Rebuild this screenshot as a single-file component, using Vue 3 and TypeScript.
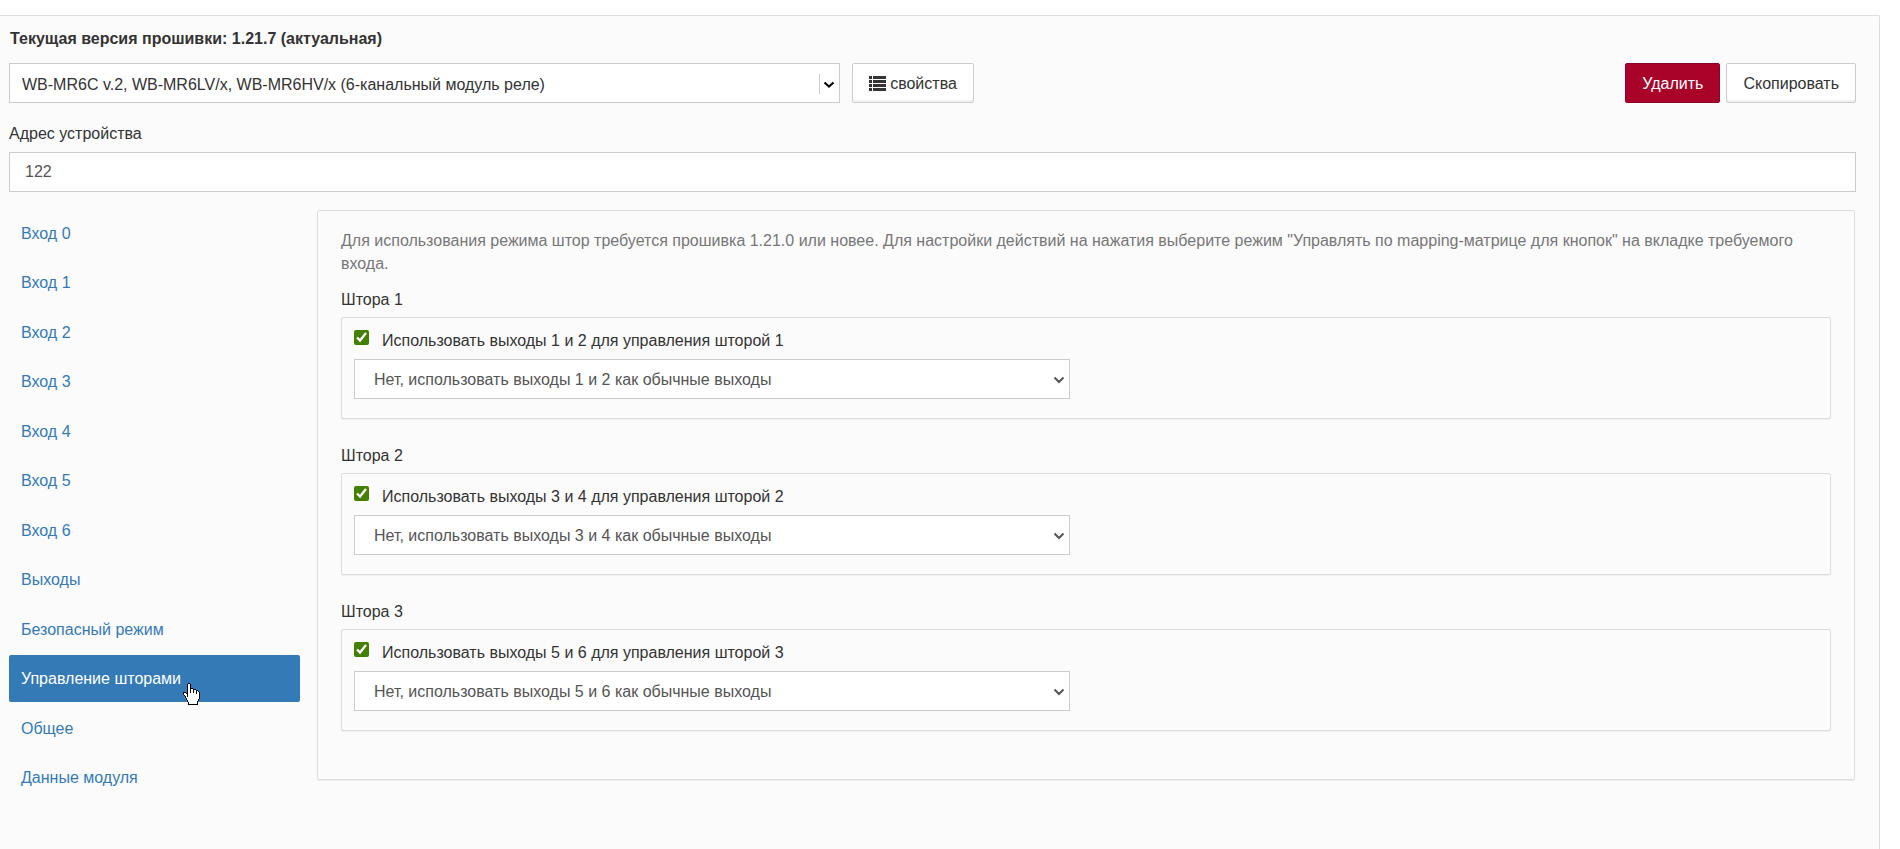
<script setup lang="ts">
import { ref } from 'vue'

interface Curtain {
  id: number
  outputs: string
  enabled: boolean
}

const device = ref('WB-MR6C v.2, WB-MR6LV/x, WB-MR6HV/x (6-канальный модуль реле)')
const address = ref('122')
const activeTab = ref('Управление шторами')

const tabs: string[] = [
  'Вход 0',
  'Вход 1',
  'Вход 2',
  'Вход 3',
  'Вход 4',
  'Вход 5',
  'Вход 6',
  'Выходы',
  'Безопасный режим',
  'Управление шторами',
  'Общее',
  'Данные модуля',
]

const curtains = ref<Curtain[]>([
  { id: 1, outputs: '1 и 2', enabled: true },
  { id: 2, outputs: '3 и 4', enabled: true },
  { id: 3, outputs: '5 и 6', enabled: true },
])

// Hand pointer bitmap: X is the outline, o is the fill.
const handRows: string[] = [
  '     XX',
  '    XooX',
  '    XooX',
  '    XooX',
  '    XooX',
  '    XooXXX',
  '    XooXooXXX',
  '    XooXooXooXX',
  '    XooXooXooXoX',
  'XXX XooXooXooXooX',
  'XooXXooooooooXooX',
  'XoooXoooooooooooX',
  ' XooXoooooooooooX',
  '  XoXoooooooooooX',
  '  XoooooooooooooX',
  '   XooooooooooooX',
  '   XoooooooooooX',
  '    XooooooooooX',
  '    XoooooooooX',
  '     XooooooooX',
  '     XooooooooX',
  '     XXXXXXXXXX',
]

function bitmapPath(mark: string): string {
  return handRows
    .flatMap((row, y) => [...row].map((c, x) => (c === mark ? `M${x} ${y}h1v1h-1z` : '')))
    .join('')
}

const handOutline = bitmapPath('X')
const handFill = bitmapPath('o')
</script>

<template>
  <main class="device-panel">
    <h1 class="firmware">Текущая версия прошивки: 1.21.7 (актуальная)</h1>

    <div class="toolbar">
      <div class="select-wrap device-select">
        <select v-model="device" class="control device-control" aria-label="Тип устройства">
          <option>WB-MR6C v.2, WB-MR6LV/x, WB-MR6HV/x (6-канальный модуль реле)</option>
        </select>
        <span class="separator"></span>
        <svg class="chevron chevron-dark" width="12" height="8" viewBox="0 0 12 8" aria-hidden="true">
          <path d="M1.5 1.5 6 5.6 10.5 1.5" />
        </svg>
      </div>
      <button type="button" class="btn">
        <svg class="list-icon" width="17" height="15" viewBox="0 0 17 15" aria-hidden="true">
          <path d="M0 0h3v3H0zM4 0h13v3H4zM0 4h3v3H0zM4 4h13v3H4zM0 8h3v3H0zM4 8h13v3H4zM0 12h3v3H0zM4 12h13v3H4z" />
        </svg>
        свойства
      </button>
      <div class="actions">
        <button type="button" class="btn btn-danger">Удалить</button>
        <button type="button" class="btn">Скопировать</button>
      </div>
    </div>

    <label class="address-label" for="address">Адрес устройства</label>
    <input id="address" v-model="address" class="control address-input" type="text" />

    <div class="body">
      <nav class="tabs">
        <a
          v-for="tab in tabs"
          :key="tab"
          href="#"
          class="tab"
          :class="{ active: tab === activeTab }"
          @click.prevent="activeTab = tab"
        >
          {{ tab }}
          <svg v-if="tab === activeTab" class="hand" width="17" height="22" viewBox="0 0 17 22" shape-rendering="crispEdges" aria-hidden="true">
            <path :d="handFill" fill="#fff" />
            <path :d="handOutline" fill="#000" />
          </svg>
        </a>
      </nav>

      <section class="card content">
        <p class="hint">
          Для использования режима штор требуется прошивка 1.21.0 или новее. Для настройки действий на нажатия выберите режим "Управлять по mapping-матрице для кнопок" на вкладке требуемого входа.
        </p>
        <section v-for="c in curtains" :key="c.id" class="curtain">
          <h2 class="curtain-title">Штора {{ c.id }}</h2>
          <div class="card curtain-card">
            <label class="check">
              <input v-model="c.enabled" type="checkbox" />
              <span>Использовать выходы {{ c.outputs }} для управления шторой {{ c.id }}</span>
            </label>
            <div class="select-wrap curtain-select">
              <select class="control curtain-control" :aria-label="`Режим шторы ${c.id}`">
                <option>Нет, использовать выходы {{ c.outputs }} как обычные выходы</option>
              </select>
              <svg class="chevron" width="12" height="8" viewBox="0 0 12 8" aria-hidden="true">
                <path d="M1.5 1.5 6 6 10.5 1.5" />
              </svg>
            </div>
          </div>
        </section>
      </section>
    </div>
  </main>
</template>

<style>
body {
  background: #fff;
}
</style>

<style scoped>
.device-panel,
.device-panel * {
  box-sizing: border-box;
}

.device-panel {
  min-height: calc(100vh - 15px);
  margin: 15px 20px 0 0;
  padding: 11px 23px 20px 9px;
  border: 1px solid #ddd;
  border-width: 1px 1px 0 0;
  border-radius: 0 2px 0 0;
  background: #fbfbfb;
  color: #333;
  font: 16px/23px "Liberation Sans", Arial, sans-serif;
}

.firmware {
  margin: 0 0 13px 1px;
  font-size: 16px;
  line-height: 23px;
}

.toolbar {
  display: flex;
  gap: 12px;
}

.select-wrap {
  position: relative;
}

.device-select {
  flex: 0 0 45%;
}

.control {
  display: block;
  width: 100%;
  height: 40px;
  margin: 0;
  border: 1px solid #ccc;
  border-radius: 0;
  outline: 0;
  background: #fff;
  color: #555;
  font: inherit;
  appearance: none;
}

.device-control {
  padding: 2px 40px 0 12px;
  color: #333;
}

.address-input {
  padding: 0 15px 1px;
}

.curtain-control {
  padding: 0 30px 0 19px;
}

.separator {
  position: absolute;
  top: 11px;
  right: 20px;
  width: 1px;
  height: 20px;
  background: #ccc;
  pointer-events: none;
}

.chevron {
  position: absolute;
  top: 17px;
  right: 5px;
  fill: none;
  stroke: #555;
  stroke-width: 2;
  pointer-events: none;
}

.chevron-dark {
  top: 18px;
  stroke: #000;
}

.btn {
  display: flex;
  align-items: center;
  gap: 4px;
  height: 40px;
  padding: 0 16px;
  border: 1px solid #ccc;
  border-radius: 2px;
  background: #fff;
  box-shadow: inset 0 -2px 0 #f2f2f2;
  color: #333;
  font: inherit;
  cursor: pointer;
}

.btn-danger {
  border-color: #900323;
  background: #a90329;
  box-shadow: none;
  color: #fff;
}

.list-icon {
  fill: #333;
}

.actions {
  display: flex;
  gap: 6px;
  margin-left: auto;
}

.address-label {
  display: block;
  margin: 19px 0 7px;
}

.body {
  display: flex;
  align-items: flex-start;
  gap: 17px;
  margin-top: 18px;
}

.tabs {
  display: flex;
  flex: 0 0 291px;
  flex-direction: column;
  justify-content: space-between;
  height: 591px;
}

.tab {
  position: relative;
  padding: 12px;
  border-radius: 2px;
  color: #337ab7;
  text-decoration: none;
}

.tab.active {
  background: #337ab7;
  color: #fff;
}

.hand {
  position: absolute;
  top: 28px;
  left: 174px;
}

.card {
  border: 1px solid #ddd;
  border-radius: 2px;
  box-shadow: 0 1px 1px #eee;
}

.content {
  flex: 1;
  min-width: 0;
  margin-right: 1px;
  padding: 18px 23px 23px;
}

.hint {
  margin: 0 0 13px;
  color: #777;
}

.curtain {
  margin-bottom: 25px;
}

.curtain-title {
  margin: 0 0 6px;
  font-size: 16px;
  font-weight: 400;
  line-height: 23px;
}

.curtain-card {
  padding: 11px 12px 19px;
}

.check {
  display: flex;
  align-items: flex-start;
  gap: 13px;
  margin-bottom: 7px;
}

.check input {
  width: 15px;
  height: 15px;
  margin: 1px 0 0;
  accent-color: #438000;
}

.curtain-select {
  width: 49%;
  max-width: 716px;
}
</style>
